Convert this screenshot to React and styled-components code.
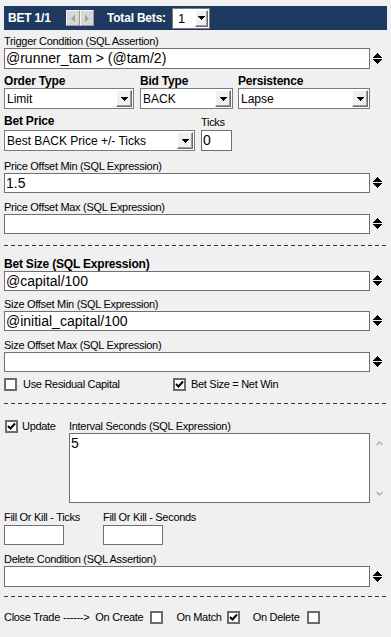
import React from 'react';
import styled, { createGlobalStyle } from 'styled-components';

const GlobalStyle = createGlobalStyle`
  html, body { margin: 0; padding: 0; background: #f0f0f0; }
  body { font-family: "Liberation Sans", Arial, sans-serif; color: #000; }
  * { box-sizing: border-box; }
`;

const NAVY = '#1f3a60';

const Page = styled.div`
  width: 391px;
  min-height: 637px;
  padding: 6px 4px 0 4px;
  background: #f0f0f0;
`;

const Header = styled.div`
  height: 24px;
  background: ${NAVY};
  display: flex;
  align-items: center;
  padding-left: 4px;
`;

const HeaderTitle = styled.span`
  color: #fff;
  font-weight: 700;
  font-size: 12px;
  letter-spacing: -0.2px;
  width: 58px;
  white-space: nowrap;
`;

const NavGroup = styled.div`
  display: flex;
`;

const NavButton = styled.div`
  width: 14px;
  height: 16px;
  background: #d8d8d8;
  border: 1px solid;
  border-color: #f6f6f6 #9a9a9a #9a9a9a #f6f6f6;
  display: flex;
  align-items: center;
  justify-content: center;
`;

const TotalLabel = styled.span`
  color: #fff;
  font-weight: 700;
  font-size: 12px;
  letter-spacing: -0.2px;
  margin-left: 13px;
  white-space: nowrap;
`;

const MiniSelect = styled.div`
  margin-left: 6px;
  width: 38px;
  height: 21px;
  background: #fff;
  border: 1px solid #7a7a7a;
  display: flex;
  align-items: center;
  justify-content: space-between;
  padding-left: 5px;
  font-size: 13px;
`;

const DropButton = styled.div`
  width: ${p => p.$w || 16}px;
  height: 17px;
  margin-right: 1px;
  background: #f0f0f0;
  border: 1px solid;
  border-color: #ffffff #6a6a6a #6a6a6a #ffffff;
  box-shadow: inset -1px -1px 0 #a0a0a0;
  display: flex;
  align-items: center;
  justify-content: center;
  flex: none;
`;

const Label = styled.div`
  font-size: 11px;
  line-height: 13px;
  letter-spacing: -0.3px;
  margin-top: ${p => p.$mt || 0}px;
  white-space: nowrap;
`;

const BoldLabel = styled(Label)`
  font-weight: 700;
  font-size: 12px;
  line-height: 14px;
  letter-spacing: -0.2px;
`;

const FieldRow = styled.div`
  display: flex;
  align-items: center;
  margin-top: ${p => p.$mt || 0}px;
`;

const TextBox = styled.div`
  width: ${p => p.$w || 366}px;
  height: ${p => p.$h || 20}px;
  margin-top: ${p => p.$mt || 0}px;
  background: #fff;
  border: 1px solid #707070;
  font-size: 14px;
  line-height: ${p => (p.$h || 20) - 2}px;
  padding: 0 1px;
  white-space: nowrap;
  overflow: hidden;
  flex: none;
`;

const SpinIcon = styled.svg`
  margin-left: 3px;
  flex: none;
`;

const Combo = styled.div`
  width: ${p => p.$w}px;
  height: 21px;
  margin-top: ${p => p.$mt || 0}px;
  background: #fff;
  border: 1px solid #7a7a7a;
  display: flex;
  align-items: center;
  padding-left: 2px;
  font-size: 12px;
`;

const ComboValue = styled.span`
  flex: 1;
  white-space: nowrap;
  overflow: hidden;
`;

const GridRow = styled.div`
  display: grid;
  grid-template-columns: ${p => p.$cols};
  align-items: ${p => p.$align || 'start'};
  margin-top: ${p => p.$mt || 0}px;
`;

const Column = styled.div`
  display: flex;
  flex-direction: column;
  align-items: flex-start;
`;

const Divider = styled.div`
  height: 1px;
  margin-top: ${p => p.$mt || 0}px;
  background: repeating-linear-gradient(90deg, ${NAVY} 0 4px, transparent 4px 7px);
`;

const CheckItem = styled.div`
  display: flex;
  align-items: center;
  gap: ${p => p.$gap ?? 6}px;
  margin-left: ${p => p.$ml || 0}px;
  font-size: 11px;
  line-height: 13px;
  letter-spacing: -0.3px;
  white-space: nowrap;
`;

const Box = styled.div`
  width: 13px;
  height: 13px;
  background: #fff;
  border: 2px solid #6b6b6b;
  display: flex;
  align-items: center;
  justify-content: center;
  flex: none;
`;

const UpdateSection = styled.div`
  display: flex;
  align-items: flex-start;
  margin-top: ${p => p.$mt || 0}px;
`;

const UpdateLeft = styled.div`
  width: 65px;
  padding-left: 1px;
  flex: none;
`;

const AreaRow = styled.div`
  display: flex;
`;

const TextArea = styled.div`
  width: 301px;
  height: 70px;
  background: #fff;
  border: 1px solid #707070;
  font-size: 14px;
  line-height: 16px;
  padding: 1px 1px 0;
`;

const ScrollCol = styled.div`
  height: 70px;
  display: flex;
  flex-direction: column;
  justify-content: space-between;
  padding: 8px 0 7px 6px;
`;

const CloseRow = styled.div`
  display: flex;
  align-items: center;
  margin-top: ${p => p.$mt || 0}px;
  font-size: 11px;
  line-height: 13px;
  letter-spacing: -0.3px;
  white-space: nowrap;
`;

const Arrow = styled.span`
  margin: 0 6px 0 3px;
`;

const ToggleGroups = styled.div`
  display: flex;
  align-items: center;
  gap: 13px;
`;

const Pixels = ({ rows, w, h, color = '#000', ...rest }) => (
  <svg width={w} height={h} viewBox={`0 0 ${w} ${h}`} shapeRendering="crispEdges" {...rest}>
    {rows.map(([x, y, rw, rh = 1], i) => (
      <rect key={i} x={x} y={y} width={rw} height={rh} fill={color} />
    ))}
  </svg>
);

const SPIN = [[4,0,1],[3,1,3],[2,2,5],[1,3,7],[0,4,9],[0,6,9],[1,7,7],[2,8,5],[3,9,3],[4,10,1]];
const DOWN = [[0,0,7],[1,1,5],[2,2,3],[3,3,1]];
const LEFT = [[0,3,1,1],[1,2,1,3],[2,1,1,5],[3,0,1,7]];
const RIGHT = [[3,3,1,1],[2,2,1,3],[1,1,1,5],[0,0,1,7]];

const Spinner = () => (
  <SpinIcon as="span">
    <Pixels rows={SPIN} w={9} h={11} />
  </SpinIcon>
);

const DownArrow = () => <Pixels rows={DOWN} w={7} h={4} />;

const Field = ({ value, h, mt }) => (
  <FieldRow $mt={mt}>
    <TextBox $h={h}>{value}</TextBox>
    <Spinner />
  </FieldRow>
);

const Dropdown = ({ w, value, mt }) => (
  <Combo $w={w} $mt={mt}>
    <ComboValue>{value}</ComboValue>
    <DropButton>
      <DownArrow />
    </DropButton>
  </Combo>
);

const Check = ({ checked }) => (
  <Box>
    {checked && (
      <svg width="9" height="9" viewBox="0 0 9 9">
        <polyline points="1,4 3.5,6.5 8,1.5" fill="none" stroke="#000" strokeWidth="2" />
      </svg>
    )}
  </Box>
);

const Chevron = ({ up }) => (
  <svg width="7" height="5" viewBox="0 0 7 5">
    <polyline
      points={up ? '0.5,4 3.5,1 6.5,4' : '0.5,1 3.5,4 6.5,1'}
      fill="none"
      stroke="#a8a8a8"
      strokeWidth="1.2"
    />
  </svg>
);

export default function App() {
  return (
    <>
      <GlobalStyle />
      <Page>
        <Header>
          <HeaderTitle>BET 1/1</HeaderTitle>
          <NavGroup>
            <NavButton>
              <Pixels rows={LEFT} w={4} h={7} color="#a6a6a6" />
            </NavButton>
            <NavButton>
              <Pixels rows={RIGHT} w={4} h={7} color="#a6a6a6" />
            </NavButton>
          </NavGroup>
          <TotalLabel>Total Bets:</TotalLabel>
          <MiniSelect>
            <span>1</span>
            <DropButton $w={13}>
              <DownArrow />
            </DropButton>
          </MiniSelect>
        </Header>

        <Label $mt={5}>Trigger Condition (SQL Assertion)</Label>
        <Field value="@runner_tam > (@tam/2)" h={21} />

        <GridRow $cols="136px 98px 132px" $mt={5}>
          <Column>
            <BoldLabel>Order Type</BoldLabel>
            <Dropdown w={130} value="Limit" />
          </Column>
          <Column>
            <BoldLabel>Bid Type</BoldLabel>
            <Dropdown w={93} value="BACK" />
          </Column>
          <Column>
            <BoldLabel>Persistence</BoldLabel>
            <Dropdown w={132} value="Lapse" />
          </Column>
        </GridRow>

        <GridRow $cols="197px auto" $align="end" $mt={5}>
          <Column>
            <BoldLabel>Bet Price</BoldLabel>
            <Dropdown w={191} value="Best BACK Price +/- Ticks" mt={2} />
          </Column>
          <Column>
            <Label>Ticks</Label>
            <TextBox $w={31} $h={21} $mt={1}>0</TextBox>
          </Column>
        </GridRow>

        <Label $mt={9}>Price Offset Min (SQL Expression)</Label>
        <Field value="1.5" />
        <Label $mt={8}>Price Offset Max (SQL Expression)</Label>
        <Field value="" />

        <Divider $mt={11} />

        <BoldLabel $mt={11}>Bet Size (SQL Expression)</BoldLabel>
        <Field value="@capital/100" />
        <Label $mt={7}>Size Offset Min (SQL Expression)</Label>
        <Field value="@initial_capital/100" />
        <Label $mt={8}>Size Offset Max (SQL Expression)</Label>
        <Field value="" />

        <GridRow $cols="169px auto" $mt={6}>
          <CheckItem>
            <Check />
            <span>Use Residual Capital</span>
          </CheckItem>
          <CheckItem $gap={5}>
            <Check checked />
            <span>Bet Size = Net Win</span>
          </CheckItem>
        </GridRow>

        <Divider $mt={12} />

        <UpdateSection $mt={16}>
          <UpdateLeft>
            <CheckItem $gap={4}>
              <Check checked />
              <span>Update</span>
            </CheckItem>
          </UpdateLeft>
          <Column>
            <Label>Interval Seconds (SQL Expression)</Label>
            <AreaRow>
              <TextArea>5</TextArea>
              <ScrollCol>
                <Chevron up />
                <Chevron />
              </ScrollCol>
            </AreaRow>
          </Column>
        </UpdateSection>

        <GridRow $cols="99px auto" $mt={8}>
          <Column>
            <Label>Fill Or Kill - Ticks</Label>
            <TextBox $w={60} $mt={1} />
          </Column>
          <Column>
            <Label>Fill Or Kill - Seconds</Label>
            <TextBox $w={60} $mt={1} />
          </Column>
        </GridRow>

        <Label $mt={8}>Delete Condition (SQL Assertion)</Label>
        <Field value="" h={21} />

        <Divider $mt={9} />

        <CloseRow $mt={14}>
          <span>Close Trade</span>
          <Arrow>------&gt;</Arrow>
          <ToggleGroups>
            <CheckItem $gap={7}>
              <span>On Create</span>
              <Check />
            </CheckItem>
            <CheckItem $gap={5}>
              <span>On Match</span>
              <Check checked />
            </CheckItem>
            <CheckItem $gap={7}>
              <span>On Delete</span>
              <Check />
            </CheckItem>
          </ToggleGroups>
        </CloseRow>
      </Page>
    </>
  );
}
